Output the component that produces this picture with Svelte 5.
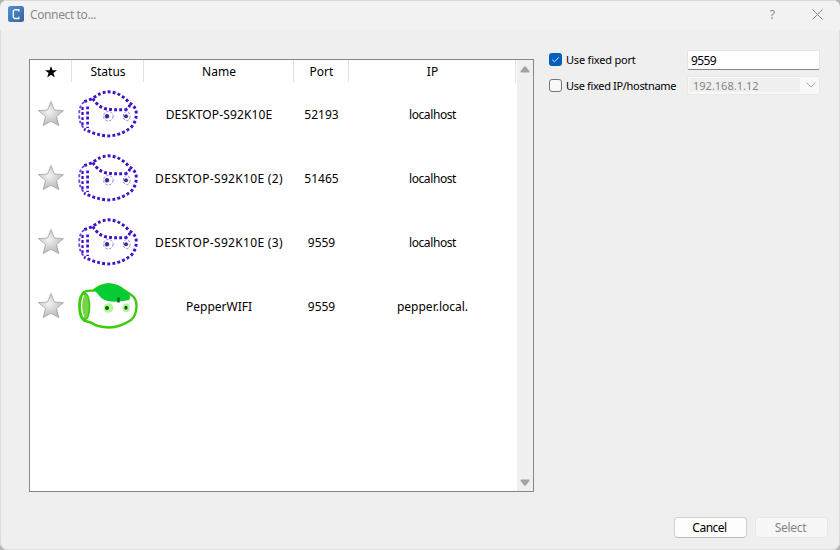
<script>
  const robots = [
    { name: 'DESKTOP-S92K10E', port: '52193', ip: 'localhost', online: false, track: 0.14 },
    { name: 'DESKTOP-S92K10E (2)', port: '51465', ip: 'localhost', online: false, track: 0.32 },
    { name: 'DESKTOP-S92K10E (3)', port: '9559', ip: 'localhost', online: false, track: 0.32 },
    { name: 'PepperWIFI', port: '9559', ip: 'pepper.local.', online: true, track: 0 }
  ];
  let port = $state('9559');
</script>

<div class="page">
  <div class="window">
    <header>
      <svg class="logo" width="16" height="16" viewBox="0 0 16 16">
        <defs><linearGradient id="lg" x1="0" y1="0" x2="1" y2="1"><stop offset="0" stop-color="#4e92cf" /><stop offset="1" stop-color="#3a5fa0" /></linearGradient></defs>
        <rect width="16" height="16" rx="2.5" fill="url(#lg)" />
        <path d="M10.8 5.4V3.7H6.7L5.3 5v6.2l1.4 1.3h4.1v-1.7" fill="none" stroke="#f4f8ff" stroke-width="1.4" />
      </svg>
      <span class="title">Connect to...</span>
      <span class="help">?</span>
      <svg class="close" width="11" height="11" viewBox="0 0 11 11"><path d="M.5 .5l10 10M10.5 .5l-10 10" stroke="#858585" fill="none" /></svg>
    </header>
    <main>
      <div class="list">
        <div class="table">
          <div class="row head">
            <div><svg width="12" height="12" viewBox="0 0 12 12"><path d="M6 0L7.5 4.2H12L8.4 7L9.8 11.5L6 8.8L2.2 11.5L3.6 7L0 4.2H4.5Z" fill="#000" /></svg></div>
            <div>Status</div><div>Name</div><div>Port</div><div>IP</div>
          </div>
          {#each robots as r, i}
            <div class="row">
              <div>
                <svg class="star" width="28" height="28" viewBox="0 0 28 28">
                  <defs><radialGradient id="sg{i}" cx=".42" cy=".4" r=".6"><stop offset="0" stop-color="#f4f4f4" /><stop offset="1" stop-color="#b9b9b9" /></radialGradient></defs>
                  <path d="M14 1.5L17.4 10L26.5 10.6L19.5 16.6L21.8 25.6L14 21.3L6.2 25.6L8.5 16.6L1.5 10.6L10.6 10Z" fill="url(#sg{i})" stroke="#aaa" stroke-width=".9" stroke-linejoin="round" />
                </svg>
              </div>
              <div>
                {#if r.online}
                  <svg class="robot" width="64" height="50" viewBox="0 0 64 50">
                    <path d="M8 10Q13 8.2 17.3 8.7Q24 2.8 32.3 2.2Q42 3 47 7.5L54 12Q61 16 60.5 25Q60 34 55 38Q44 45.5 33 45.5Q21 45 16 41L8 38.5C2 34 1.5 15 8 10Z" fill="#fff" stroke="#3ccc0a" stroke-width="2.4" stroke-linejoin="round" />
                    <ellipse cx="9" cy="24.5" rx="4.6" ry="13" fill="#76d44a" stroke="#3ccc0a" stroke-width="1.6" />
                    <path d="M7.6 13Q3.4 24 7.6 35" fill="none" stroke="#fff" stroke-width="1.2" />
                    <path d="M17.3 8.7Q25 2 32.3 1.5Q40 1.5 46 6L53.3 11.5Q54.8 15 53.3 18Q43 20.2 35.7 19.6Q27 19 22.5 13Q20 9 17.3 8.7Z" fill="#05cc35" />
                    <circle cx="32.5" cy="26" r="4.8" fill="#b5f59a" /><ellipse cx="50.2" cy="25.8" rx="3.6" ry="4.5" fill="#b5f59a" />
                    <circle cx="31" cy="26" r="2" fill="#145414" /><ellipse cx="50" cy="25.8" rx="1.6" ry="2" fill="#145414" />
                    <path d="M42.5 15.5v5" stroke="#0b641b" stroke-width="2.4" />
                  </svg>
                {:else}
                  <svg class="robot" width="64" height="50" viewBox="0 0 64 50">
                    <g fill="none" stroke="#4212c9" stroke-width="2.9" stroke-dasharray="2.9 2.2">
                      <path d="M8.3 11.7L16.7 8.5Q25 2 32 1.8Q44 2 53 12.5Q61 17 60.2 25Q60 32 55 37.5Q44 46 31.3 46Q18 44.5 8 39" />
                      <path d="M16.7 8.5Q23 18 31 19Q40 20.3 50 19.5Q55 17 53 12.5" />
                      <path d="M11.6 16.4V38" stroke-width="2.7" />
                      <path d="M6.5 17V37" stroke-width="2.3" />
                    </g>
                    <path d="M8.3 12Q3 15 3.2 25Q3.3 34 8 38" fill="none" stroke="#6947dc" stroke-width="1.8" stroke-dasharray="3 2" />
                    <g fill="none" stroke="#8f7ce6" stroke-width="1" stroke-dasharray="2.5 1.5"><circle cx="32.3" cy="26.2" r="4.8" /><ellipse cx="50.7" cy="26.2" rx="3.4" ry="4.6" /></g>
                    <circle cx="31" cy="26.3" r="2.2" fill="#35309e" /><circle cx="50" cy="26.3" r="2" fill="#35309e" />
                  </svg>
                {/if}
              </div>
              <div style:letter-spacing="{r.track}px">{r.name}</div>
              <div>{r.port}</div>
              <div class:tight={!r.online}>{r.ip}</div>
            </div>
          {/each}
        </div>
        <div class="scroll">
          <svg width="10" height="7" viewBox="0 0 10 7"><path d="M1 6.5Q0 6.5 .7 5L4 .8Q5-.3 6 .8L9.3 5Q10 6.5 9 6.5Z" fill="#a3a3a3" /></svg>
          <svg width="10" height="7" viewBox="0 0 10 7"><path d="M1 .5Q0 .5 .7 2L4 6.2Q5 7.3 6 6.2L9.3 2Q10 .5 9 .5Z" fill="#a3a3a3" /></svg>
        </div>
      </div>
      <div class="options">
        <div class="option">
          <span class="check on"><svg width="13" height="13" viewBox="0 0 13 13"><path d="M3.2 6.7l2.2 2.1L9.8 4.3" fill="none" stroke="#d7e8fa" /></svg></span>
          <span class="label">Use fixed port</span>
          <input bind:value={port} />
        </div>
        <div class="option">
          <span class="check"></span>
          <span class="label host">Use fixed IP/hostname</span>
          <div class="combo"><span>192.168.1.12</span><svg width="10" height="6" viewBox="0 0 10 6"><path d="M.5 .7l4.5 4.3L9.5 .7" fill="none" stroke="#a5a5a5" /></svg></div>
        </div>
      </div>
    </main>
    <footer><button>Cancel</button><button disabled>Select</button></footer>
  </div>
</div>

<style>
  .page { width: 840px; height: 550px; background: #b5b5b5; font: 12px "Noto Sans", sans-serif; color: #000; }
  .page * { box-sizing: border-box; }
  .window { height: 550px; background: #efefef; border-radius: 8px; overflow: hidden; display: flex; flex-direction: column; box-shadow: inset 0 0 0 1px #dedede; }
  header { height: 30px; flex: none; display: flex; align-items: center; padding: 0 17px 2px 8px; background: #f2f2f2; border-top: 1px solid #d8d8d8; color: #8b8b8b; }
  .logo { margin-top: -1px; }
  .title { margin-left: 6px; flex: 1; letter-spacing: -0.38px; }
  .help { margin-right: 37px; }
  main { flex: 1; display: flex; padding: 29px 20px 0 29px; }
  .list { flex: none; width: 505px; height: 433px; border: 1px solid #828790; background: #fff; display: flex; justify-content: space-between; }
  .table { width: 486px; }
  .row { display: grid; grid-template-columns: 42px 72px 150px 55px 167px; height: 64px; align-items: center; text-align: center; }
  .row > div { display: flex; justify-content: center; align-items: center; white-space: nowrap; }
  .head { height: 22px; }
  .head > div { height: 22px; border-right: 1px solid #e2e2e2; padding: 1px 0 0 1px; }
  .head > div:first-child { padding-left: 0; }
  .robot { position: relative; top: 1px; }
  .row .tight { letter-spacing: -0.4px; }
  .scroll { width: 16px; background: #f0f0f0; display: flex; flex-direction: column; justify-content: space-between; align-items: center; padding: 6px 0 5px; }
  .options { margin: -10px 0 0 15px; display: flex; flex-direction: column; gap: 6px; font-size: 11px; }
  .option { display: flex; align-items: center; height: 20px; }
  .check { flex: none; width: 13px; height: 13px; border: 1px solid #777; border-radius: 3px; background: #f7f7f7; display: flex; }
  .check.on { border: 0; background: #005fb8; }
  .label { flex: none; width: 121px; margin-left: 4px; letter-spacing: -0.2px; white-space: nowrap; }
  .host { letter-spacing: -0.33px; }
  input { width: 133px; height: 20px; border: 1px solid #e5e5e5; border-bottom-color: #858585; border-radius: 2px; background: #fff; font: 12px "Noto Sans", sans-serif; padding: 2px 2px 0 3px; margin: 1px 0 0; letter-spacing: -.6px; outline: none; }
  .combo { width: 133px; height: 19px; background: #f8f8f8; border: 1px solid #e9e9e9; border-radius: 2px; display: flex; align-items: center; justify-content: space-between; padding: 0 3px 0 1px; color: #858585; }
  .combo span { width: 111px; height: 14px; line-height: 15px; background: #efefef; padding-left: 4px; }
  footer { display: flex; justify-content: flex-end; gap: 8px; padding: 0 12px 12px; }
  button { width: 73px; height: 21px; border: 1px solid #d0d0d0; border-bottom-color: #bababa; border-radius: 4px; background: #fdfdfd; color: #000; font: 12px "Noto Sans", sans-serif; padding: 0 2px 0 0; letter-spacing: -.5px; line-height: 19px; }
  button:disabled { color: #858585; border-color: #e8e8e8; background: #f7f7f7; letter-spacing: -.3px; }
</style>
